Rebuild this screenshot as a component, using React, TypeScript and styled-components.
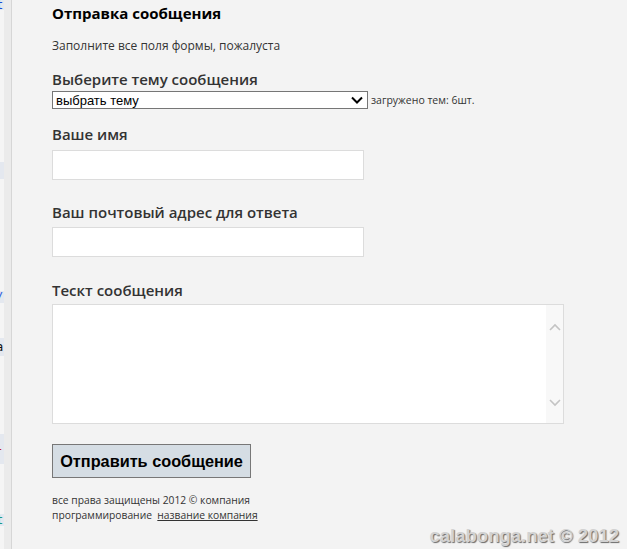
import React from 'react'
import styled, {createGlobalStyle} from 'styled-components';

const GlobalStyle = createGlobalStyle`
  html, body {
    margin: 0;
    padding: 0;
    background: #f3f3f3;
  }
  #root {
    width: 627px;
    height: 549px;
  }
`;

// обрывки соседней колонки слева
const crumbs = [
    {h: 10, mark: true, text: 't', color: '#1a4fd8'},
    {h: 152, mark: false},
    {h: 17, mark: true},
    {h: 112, mark: false},
    {h: 12, mark: true, text: '/', color: '#2a5be0'},
    {h: 35, mark: false},
    {h: 18, mark: true, text: 'a', color: '#111'},
    {h: 78, mark: false},
    {h: 30, mark: true, text: '-', color: '#c02020'},
    {h: 50, mark: false},
    {h: 12, mark: true, text: 't', color: '#1a9a8a'},
];

const App = () => {
    return (
        <Page>
            <GlobalStyle/>
            <LeftStrip>
                <CrumbColumn>
                    {crumbs.map((c, i) => (
                        <Crumb key={i} $h={c.h} $mark={c.mark} $color={c.color}>{c.text}</Crumb>
                    ))}
                </CrumbColumn>
                <Gutter/>
            </LeftStrip>
            <Main>
                <Title>Отправка сообщения</Title>
                <Hint>Заполните все поля формы, пожалуста</Hint>

                <Label $top={15}>Выберите тему сообщения</Label>
                <SelectRow>
                    <SelectBox>
                        <SelectText>выбрать тему</SelectText>
                        <svg width="12" height="8" viewBox="0 0 12 8">
                            <path d="M1 1.5 L6 6.5 L11 1.5" fill="none" stroke="#000" strokeWidth="2"/>
                        </svg>
                    </SelectBox>
                    <Loaded>загружено тем: 6шт.</Loaded>
                </SelectRow>

                <Label $top={15}>Ваше имя</Label>
                <TextInput $top={6}/>

                <Label $top={22}>Ваш почтовый адрес для ответа</Label>
                <TextInput $top={5}/>

                <Label $top={23}>Тескт сообщения</Label>
                <AreaBox>
                    <Area/>
                    <ScrollBar>
                        <svg width="12" height="8" viewBox="0 0 12 8">
                            <path d="M1 7 L6 2 L11 7" fill="none" stroke="#c4c4c4" strokeWidth="1.6"/>
                        </svg>
                        <svg width="12" height="8" viewBox="0 0 12 8">
                            <path d="M1 1 L6 6 L11 1" fill="none" stroke="#c4c4c4" strokeWidth="1.6"/>
                        </svg>
                    </ScrollBar>
                </AreaBox>

                <SendButton>Отправить сообщение</SendButton>

                <Footer>
                    <FooterLine>все права защищены 2012 © компания</FooterLine>
                    <FooterLine>программирование&nbsp; <FooterLink href="#">название компания</FooterLink></FooterLine>
                </Footer>
            </Main>
            <Watermark>calabonga.net © 2012</Watermark>
        </Page>
    )
}

export default App;

const Page = styled.div`
  position: relative;
  width: 627px;
  height: 549px;
  display: flex;
  overflow: hidden;
  background: #f3f3f3;
  font-family: "Open Sans", "Noto Sans", sans-serif;
`;

const LeftStrip = styled.div`
  width: 12px;
  display: flex;
  flex-shrink: 0;
`;

const CrumbColumn = styled.div`
  width: 4px;
  display: flex;
  flex-direction: column;
  background: #f5f5f5;
  overflow: hidden;
`;

const Crumb = styled.div<{ $h: number; $mark: boolean; $color?: string }>`
  height: ${p => p.$h}px;
  flex-shrink: 0;
  background: ${p => p.$mark ? '#e4e8ef' : 'transparent'};
  color: ${p => p.$color || '#000'};
  font: 12px/${p => p.$h}px "DejaVu Sans Mono", monospace;
  text-indent: -4px;
  white-space: nowrap;
`;

const Gutter = styled.div`
  width: 7px;
  background: #ebebeb;
  border-right: 1px solid #d6d6d6;
`;

const Main = styled.div`
  flex: 1;
  display: flex;
  flex-direction: column;
  align-items: flex-start;
  padding: 3px 0 0 40px;
`;

const Title = styled.div`
  font-size: 15px;
  line-height: 20px;
  font-weight: 700;
  color: #000;
`;

const Hint = styled.div`
  margin-top: 15px;
  font-size: 12px;
  line-height: 16px;
  color: #333;
`;

const Label = styled.div<{ $top: number }>`
  margin-top: ${p => p.$top}px;
  font-size: 15px;
  line-height: 20px;
  font-weight: 600;
  color: #333;
`;

const SelectRow = styled.div`
  margin-top: 2px;
  display: flex;
  align-items: center;
  gap: 3px;
`;

const SelectBox = styled.div`
  box-sizing: border-box;
  width: 316px;
  height: 18px;
  border: 1px solid #767676;
  background: #fff;
  display: flex;
  align-items: center;
  justify-content: space-between;
  padding: 0 4px 0 3px;
`;

const SelectText = styled.span`
  font-family: "Liberation Sans", Arial, sans-serif;
  font-size: 13px;
  color: #000;
`;

const Loaded = styled.span`
  font-size: 10.5px;
  color: #333;
`;

const TextInput = styled.input<{ $top: number }>`
  box-sizing: border-box;
  margin-top: ${p => p.$top}px;
  width: 312px;
  height: 30px;
  border: 1px solid #dcdcdc;
  background: #fff;
  outline: none;
`;

const AreaBox = styled.div`
  box-sizing: border-box;
  margin-top: 4px;
  width: 512px;
  height: 120px;
  border: 1px solid #dcdcdc;
  background: #fff;
  display: flex;
`;

const Area = styled.textarea`
  flex: 1;
  border: none;
  outline: none;
  resize: none;
  background: transparent;
`;

const ScrollBar = styled.div`
  width: 17px;
  background: #f8f8f8;
  display: flex;
  flex-direction: column;
  align-items: center;
  justify-content: space-between;
  padding: 18px 0 16px;
`;

const SendButton = styled.button`
  box-sizing: border-box;
  margin-top: 20px;
  width: 199px;
  height: 34px;
  padding: 0;
  background: #d5dde4;
  border: 1px solid #777;
  font-family: "Liberation Sans", Arial, sans-serif;
  font-size: 16.3px;
  font-weight: 700;
  color: #000;
`;

const Footer = styled.div`
  margin-top: 15px;
  display: flex;
  flex-direction: column;
`;

const FooterLine = styled.div`
  font-size: 10.3px;
  line-height: 15px;
  color: #333;
`;

const FooterLink = styled.a`
  color: #333;
  text-decoration: underline;
`;

const Watermark = styled.div`
  position: absolute;
  right: 8px;
  bottom: 2px;
  font-family: "Liberation Sans", Arial, sans-serif;
  font-size: 18.5px;
  font-weight: 700;
  color: #d2d2d2;
  text-shadow: 1px 1px 1px #6a6a6a;
`;
